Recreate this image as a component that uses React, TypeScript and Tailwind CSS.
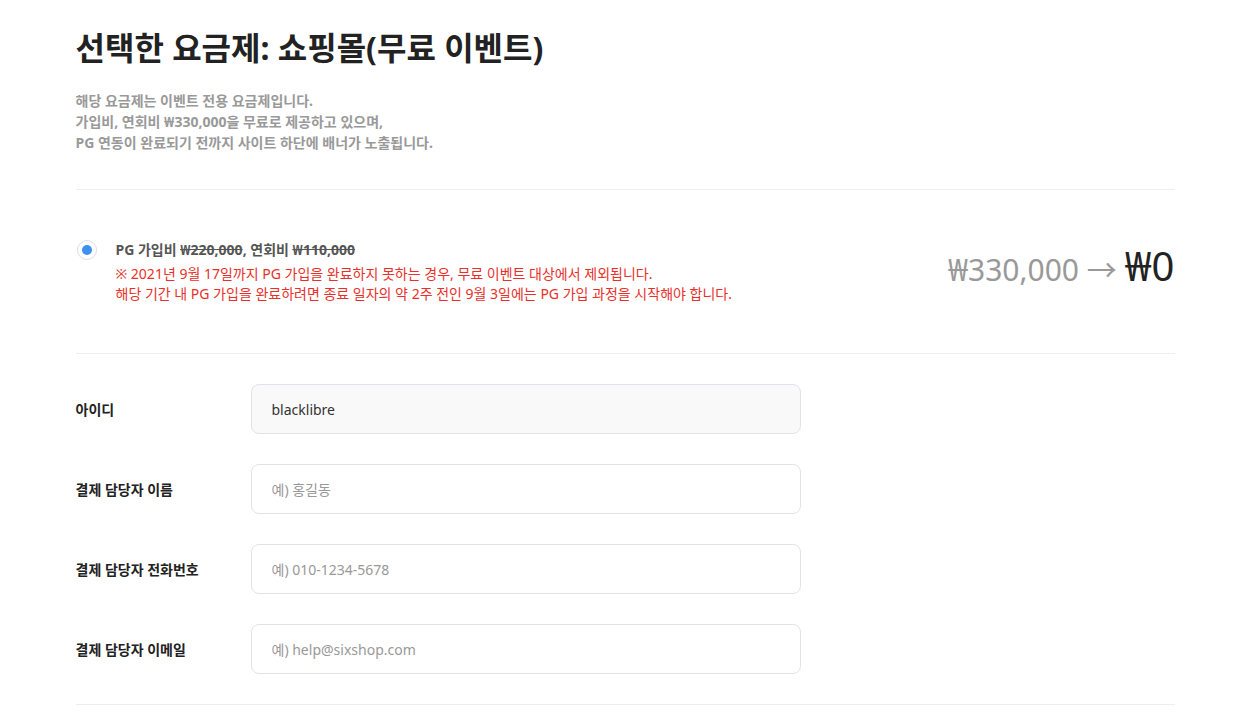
import React from "react";

const fields = [
  { label: "아이디", value: "blacklibre", placeholder: "", readOnly: true },
  { label: "결제 담당자 이름", value: "", placeholder: "예) 홍길동", readOnly: false },
  { label: "결제 담당자 전화번호", value: "", placeholder: "예) 010-1234-5678", readOnly: false },
  { label: "결제 담당자 이메일", value: "", placeholder: "예) help@sixshop.com", readOnly: false },
];

const font = '"Noto Sans", "Noto Sans CJK KR", sans-serif';

export default function App() {
  return (
    <div className="min-h-screen bg-white text-[#222]" style={{ fontFamily: font }}>
      <div className="mx-auto w-[1099px] pt-[28px]">
        <h1 className="text-[32px] font-bold leading-[40px] text-[#222]">
          선택한 요금제: 쇼핑몰(무료 이벤트)
        </h1>
        <div className="mt-[22px] text-[14px] font-bold leading-[21px] text-[#999]">
          <p>해당 요금제는 이벤트 전용 요금제입니다.</p>
          <p>가입비, 연회비 ₩330,000을 무료로 제공하고 있으며,</p>
          <p>PG 연동이 완료되기 전까지 사이트 하단에 배너가 노출됩니다.</p>
        </div>

        <div className="mt-[36px] border-t border-[#eee]" />

        <div className="flex items-center justify-between pt-[50px] pb-[49px]">
          <div className="flex items-start">
            <div className="ml-[1px] flex h-[20px] w-[20px] items-center justify-center rounded-full border border-[#ddd] bg-white">
              <div className="h-[10px] w-[10px] rounded-full bg-[#3d8ff0]" />
            </div>
            <div className="ml-[19px] text-[14px] leading-[20px]">
              <p className="font-bold text-[#555]">
                PG 가입비 <span className="line-through">₩220,000</span>, 연회비{" "}
                <span className="line-through">₩110,000</span>
              </p>
              <p className="mt-[4px] text-[#e8302a]">
                ※ 2021년 9월 17일까지 PG 가입을 완료하지 못하는 경우, 무료 이벤트 대상에서 제외됩니다.
              </p>
              <p className="text-[#e8302a]">
                해당 기간 내 PG 가입을 완료하려면 종료 일자의 약 2주 전인 9월 3일에는 PG 가입 과정을 시작해야 합니다.
              </p>
            </div>
          </div>
          <div className="mb-[12px] flex items-baseline leading-none">
            <span className="text-[30px] text-[#999]">₩330,000 →</span>
            <span className="ml-[8px] text-[40px] text-[#222]">₩0</span>
          </div>
        </div>

        <div className="border-t border-[#eee]" />

        <div className="flex flex-col gap-[30px] py-[30px]">
          {fields.map((f) => (
            <div key={f.label} className="flex items-center">
              <label className="w-[175px] text-[14px] font-bold text-[#222]">{f.label}</label>
              <input
                readOnly
                value={f.value}
                placeholder={f.placeholder}
                className={`h-[50px] w-[550px] rounded-[8px] border border-[#e2e2e8] px-[20px] text-[14px] text-[#333] outline-none placeholder:text-[#999] ${
                  f.readOnly ? "bg-[#f9f9f9]" : "bg-white"
                }`}
                style={{ fontFamily: font }}
              />
            </div>
          ))}
        </div>

        <div className="border-t border-[#eee]" />
      </div>
    </div>
  );
}
